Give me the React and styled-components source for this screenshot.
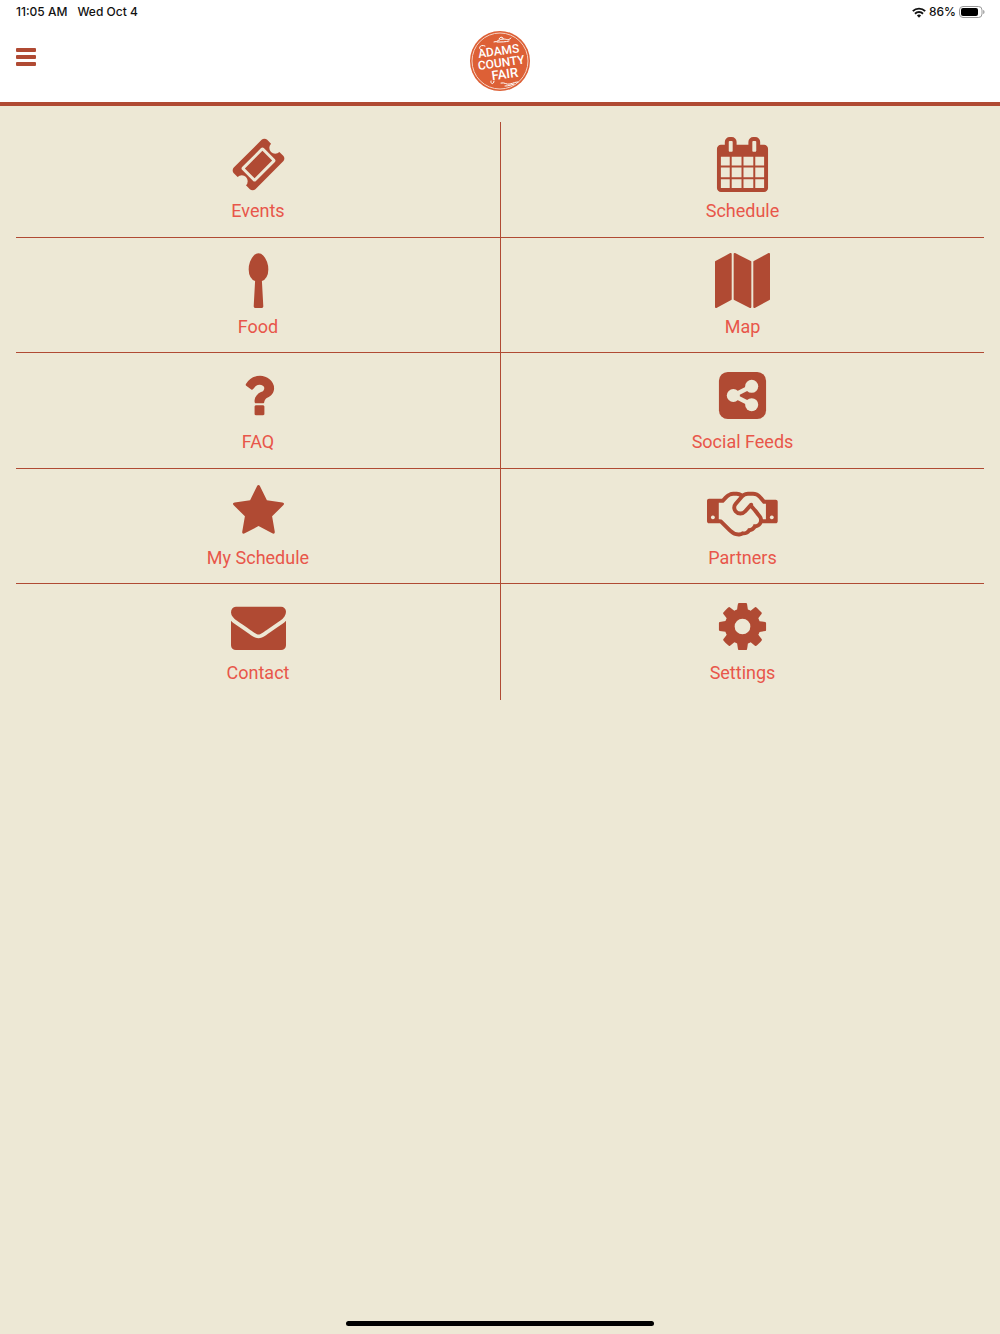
import React from "react";
import styled, { createGlobalStyle } from "styled-components";

const rust = "#b04a33";
const sand = "#ede8d5";

const GlobalStyle = createGlobalStyle`
  *, *::before, *::after { box-sizing: border-box; }
  body {
    margin: 0;
    background: ${sand};
    font-family: Inter, "Liberation Sans", sans-serif;
  }
`;

const Page = styled.div`
  min-height: 100vh;
  display: flex;
  flex-direction: column;
  background: ${sand};
`;

const StatusBar = styled.div`
  display: flex;
  align-items: center;
  justify-content: space-between;
  height: 24px;
  padding: 0 15px 0 16px;
  background: #fff;
  color: #111;
  font-size: 12px;
  font-weight: 500;
  line-height: 16px;
`;

const StatusGroup = styled.div`
  display: flex;
  align-items: center;
  gap: ${(p) => p.$gap}px;
`;

const Header = styled.header`
  display: grid;
  grid-template-columns: 1fr auto 1fr;
  align-items: start;
  height: 82px;
  padding: 7px 16px 0;
  background: #fff;
  border-bottom: 4px solid ${rust};
`;

const MenuButton = styled.button`
  justify-self: start;
  display: flex;
  flex-direction: column;
  gap: 3px;
  margin: 17px 0 0;
  padding: 0;
  border: 0;
  background: none;
  cursor: pointer;
`;

const Bar = styled.span`
  width: 20px;
  height: 4px;
  border-radius: 1px;
  background: ${rust};
`;

const HomeLink = styled.a`
  display: block;
  line-height: 0;
`;

const Menu = styled.nav`
  display: grid;
  grid-template-columns: 1fr 1fr;
  grid-template-rows: repeat(5, 1fr);
  min-height: 578px;
  margin: 16px;
`;

const MenuItem = styled.a`
  display: flex;
  flex-direction: column;
  align-items: center;
  gap: 7px;
  padding-top: 15px;
  color: #e8564a;
  font-family: Roboto, "Liberation Sans", sans-serif;
  font-size: 18px;
  line-height: 24px;
  text-decoration: none;
  border-bottom: 1px solid ${rust};
  &:nth-child(even) { border-left: 1px solid ${rust}; }
  &:nth-last-child(-n + 2) { border-bottom: 0; }
`;

const Icon = styled.svg`
  display: block;
  height: 55px;
  fill: ${rust};
`;

const HomeIndicator = styled.div`
  position: fixed;
  bottom: 8px;
  left: 50%;
  width: 308px;
  height: 5px;
  margin-left: -154px;
  border-radius: 3px;
  background: #000;
`;

const LogoText = styled.text`
  fill: #fff;
  font-family: Roboto, sans-serif;
  font-weight: 500;
`;

const items = [
  { label: "Events", d: "M1024 452l316 316-572 572-316-316zm-211 979l618-618q19-19 19-45t-19-45l-362-362q-18-18-45-18t-45 18l-618 618q-19 19-19 45t19 45l362 362q18 18 45 18t45-18zm889-637l-907 908q-37 37-90.5 37t-90.5-37l-126-126q56-56 56-136t-56-136-136-56-136 56l-125-126q-37-37-37-90.5t37-90.5l907-906q37-37 90.5-37t90.5 37l125 125q-56 56-56 136t56 136 136 56 136-56l126 125q37 37 37 90.5t-37 90.5z" },
  { label: "Schedule", d: "M192 1664h288v-288h-288v288zm352 0h320v-288h-320v288zm-352-352h288v-320h-288v320zm352 0h320v-320h-320v320zm-352-384h288v-288h-288v288zm736 736h320v-288h-320v288zm-384-736h320v-288h-320v288zm768 736h288v-288h-288v288zm-384-352h320v-320h-320v320zm-352-864v-288q0-13-9.5-22.5t-22.5-9.5h-64q-13 0-22.5 9.5t-9.5 22.5v288q0 13 9.5 22.5t22.5 9.5h64q13 0 22.5-9.5t9.5-22.5zm736 864h288v-320h-288v320zm-384-384h320v-288h-320v288zm384 0h288v-288h-288v288zm32-480v-288q0-13-9.5-22.5t-22.5-9.5h-64q-13 0-22.5 9.5t-9.5 22.5v288q0 13 9.5 22.5t22.5 9.5h64q13 0 22.5-9.5t9.5-22.5zm384-64v1280q0 52-38 90t-90 38h-1408q-52 0-90-38t-38-90v-1280q0-52 38-90t90-38h128v-96q0-66 47-113t113-47h64q66 0 113 47t47 113v96h384v-96q0-66 47-113t113-47h64q66 0 113 47t47 113v96h128q52 0 90 38t38 90z" },
  { label: "Food", d: "M1216 536q0 145-57 243.5t-152 135.5l45 813q2 26-16 45t-44 19h-192q-26 0-44-19t-16-45l45-813q-95-37-152-135.5t-57-243.5q0-128 42.5-249.5t117.5-200 160-78.5 160 78.5 117.5 200 42.5 249.5z" },
  { label: "Map", d: "M512 0q13 0 22.5 9.5t9.5 22.5v1472q0 20-17 28l-480 256q-7 4-15 4-13 0-22.5-9.5t-9.5-22.5v-1472q0-20 17-28l480-256q7-4 15-4zm1248 0q13 0 22.5 9.5t9.5 22.5v1472q0 20-17 28l-480 256q-7 4-15 4-13 0-22.5-9.5t-9.5-22.5v-1472q0-20 17-28l480-256q7-4 15-4zm-1120 0q8 0 14 3l512 256q18 10 18 29v1472q0 13-9.5 22.5t-22.5 9.5q-8 0-14-3l-512-256q-18-10-18-29v-1472q0-13 9.5-22.5t22.5-9.5z" },
  { label: "FAQ", d: "M1088 1256v240q0 16-12 28t-28 12h-240q-16 0-28-12t-12-28v-240q0-16 12-28t28-12h240q16 0 28 12t12 28zm316-600q0 54-15.5 101t-35 76.5-55 59.5-57.5 43.5-61 35.5q-41 23-68.5 65t-27.5 67q0 17-12 32.5t-28 15.5h-240q-15 0-25.5-18.5t-10.5-37.5v-45q0-83 65-156.5t143-108.5q59-27 84-56t25-76q0-42-46.5-74t-107.5-32q-65 0-108 29-35 25-107 115-13 16-31 16-12 0-25-8l-164-125q-13-10-15.5-25t5.5-28q160-266 464-266 80 0 161 31t146 83 106 127.5 41 158.5z" },
  { label: "Social Feeds", share: true },
  { label: "My Schedule", d: "M1728 647q0 22-26 48l-363 354 86 500q1 7 1 20 0 21-10.5 35.5t-30.5 14.5q-19 0-40-12l-449-236-449 236q-22 12-40 12-21 0-31.5-14.5t-10.5-35.5q0-6 2-20l86-500-364-354q-25-27-25-48 0-37 56-46l502-73 225-455q19-41 49-41t49 41l225 455 502 73q56 9 56 46z" },
  { label: "Partners", width: 2304, d: "M192 1152q40 0 56-32t0-64-56-32-56 32 0 64 56 32zm1473-58q-10-13-38.5-50t-41.5-54-38-49-42.5-53-40.5-47-45-49l-125 140q-83 94-208.5 92t-205.5-98q-57-69-56.5-158t58.5-157l177-206q-22-11-51-16.5t-47.5-6-56.5.5-49 1q-92 0-158 66l-158 158h-155v544q5 0 21-.5t22 0 19.5 2 20.5 4.5 17.5 8.5 18.5 13.5l297 292q115 111 227 111 78 0 125-47 57 20 112.5-8t72.5-85q74 6 127-44 20-18 36-45.5t14-50.5q10 10 43 10 43 0 77-21t49.5-53 12-71.5-30.5-73.5zm159 58h96v-512h-93l-157-180q-66-76-169-76h-167q-89 0-146 67l-209 243q-28 33-28 75t27 75q43 51 110 52t111-49l193-218q25-23 53.5-21.5t47 27 8.5 56.5q16 19 56 63t60 68q29 36 82.5 105.5t64.5 84.5q52 66 60 140zm288 0q40 0 56-32t0-64-56-32-56 32 0 64 56 32zm192-576v640q0 26-19 45t-45 19h-434q-27 65-82 106.5t-125 51.5q-33 48-80.5 81.5t-102.5 45.5q-42 53-104.5 81.5t-128.5 24.5q-60 34-126 39.5t-127.5-14-117-53.5-103.5-81l-287-282h-358q-26 0-45-19t-19-45v-672q0-26 19-45t45-19h421q14-14 47-48t47.5-48 44-40 50.5-37.5 51-25.5 62-19.5 68-5.5h117q99 0 181 56 82-56 181-56h167q35 0 67 6t56.5 14.5 51.5 26.5 44.5 31 43 39.5 39 42 41 48 41.5 48.5h355q26 0 45 19t19 45z" },
  { label: "Contact", d: "M1792 710v794q0 66-47 113t-113 47h-1472q-66 0-113-47t-47-113v-794q44 49 101 87 362 246 497 345 57 42 92.5 65.5t94.5 48 110 24.5h2q51 0 110-24.5t94.5-48 92.5-65.5q170-123 498-345 57-39 100-87zm0-294q0 79-49 151t-122 123q-376 261-468 325-10 7-42.5 30.5t-54 38.5-52 33.5-57.5 27.5-50 9h-2q-23 0-50-9t-57.5-27.5-52-33.5-54-38.5-42.5-30.5q-91-64-262-182.5t-205-142.5q-62-42-117-115.5t-55-136.5q0-78 41.5-130t118.5-52h1472q65 0 112.5 47t47.5 113z" },
  { label: "Settings", d: "M1152 896q0-106-75-181t-181-75-181 75-75 181 75 181 181 75 181-75 75-181zm512-109v222q0 12-8 23t-20 13l-185 28q-19 54-39 91 35 50 107 138 10 12 10 25t-9 23q-27 37-99 108t-94 71q-12 0-26-9l-138-108q-44 23-91 38-16 136-29 186-7 28-36 28h-222q-14 0-24.5-8.5t-11.5-21.5l-28-184q-49-16-90-37l-141 107q-10 9-25 9-14 0-25-11-126-114-165-168-7-10-7-23 0-12 8-23 15-21 51-66.5t54-70.5q-27-50-41-99l-183-27q-13-2-21-12.5t-8-23.5v-222q0-12 8-23t19-13l186-28q14-46 39-92-40-57-107-138-10-12-10-24 0-10 9-23 26-36 98.5-107.5t94.5-71.5q13 0 26 10l138 107q44-23 91-38 16-136 29-186 7-28 36-28h222q14 0 24.5 8.5t11.5 21.5l28 184q49 16 90 37l142-107q9-9 24-9 13 0 25 10 129 119 165 170 7 8 7 22 0 12-8 23-15 21-51 66.5t-54 70.5q26 50 41 98l183 28q13 2 21 12.5t8 23.5z" },
];

function ShareSquare() {
  return (
    <>
      <rect x="128" y="128" width="1536" height="1536" rx="288" />
      <path d="M1195 594L597 896l598 302" fill="none" stroke={sand} strokeWidth="140" />
      <g fill={sand}>
        <circle cx="597" cy="896" r="213" />
        <circle cx="1195" cy="597" r="213" />
        <circle cx="1195" cy="1195" r="213" />
      </g>
    </>
  );
}

function Logo() {
  return (
    <svg width="60" height="60" viewBox="0 0 60 60" role="img" aria-label="Adams County Fair">
      <circle cx="30" cy="30" r="30" fill="#dd6036" />
      <circle cx="30" cy="30" r="28" fill="none" stroke="#f6d3c4" strokeWidth="1" />
      <g transform="rotate(-8 30 30)" textAnchor="middle">
        <LogoText x="30" y="24" fontSize="12">ADAMS</LogoText>
        <LogoText x="31" y="36" fontSize="12">COUNTY</LogoText>
        <LogoText x="33" y="48" fontSize="13">FAIR</LogoText>
      </g>
      <g fill="none" stroke="#fff" strokeWidth="1" strokeLinecap="round">
        <path d="M15 15c-5-2-7 2-4 4" />
        <path d="M24 11c4 0 5-3 9-3s5 2 8-1M29 8c1-3 5-2 4 0M27 11c4 0 9 0 12-1" />
        <path d="M24 50c0 4-4 3-3 0" />
        <path d="M31 52c4-1 5 2 9 1s5-2 8-2M35 55c4 0 6-1 9-2" />
      </g>
    </svg>
  );
}

function Wifi() {
  return (
    <svg width="14" height="11" viewBox="0 0 14 11" role="img" aria-label="Wi-Fi">
      <g fill="none" stroke="#111" strokeWidth="1.9">
        <path d="M.8 4.2a8.8 8.8 0 0 1 12.4 0" />
        <path d="M3 6.7a5.7 5.7 0 0 1 8 0" />
      </g>
      <path d="M7 10.8L4.9 8.6a3 3 0 0 1 4.2 0z" fill="#111" />
    </svg>
  );
}

function Battery() {
  return (
    <svg width="26" height="12" viewBox="0 0 26 12" role="img" aria-label="Battery">
      <rect x=".5" y=".5" width="22.5" height="11" rx="3.5" fill="none" stroke="#999" />
      <rect x="2" y="2" width="17" height="8" rx="2" fill="#000" />
      <path d="M24.2 4v4c1-.3 1.3-1 1.3-2s-.3-1.700-1.300-2z" fill="#999" />
    </svg>
  );
}

export default function App() {
  return (
    <Page>
      <GlobalStyle />
      <StatusBar>
        <StatusGroup $gap={10}>
          <span>11:05 AM</span>
          <span>Wed Oct 4</span>
        </StatusGroup>
        <StatusGroup $gap={3}>
          <Wifi />
          <span>86%</span>
          <Battery />
        </StatusGroup>
      </StatusBar>
      <Header>
        <MenuButton type="button" aria-label="Open menu">
          <Bar />
          <Bar />
          <Bar />
        </MenuButton>
        <HomeLink href="#home">
          <Logo />
        </HomeLink>
      </Header>
      <main>
        <Menu aria-label="Main">
          {items.map(({ label, d, width = 1792, share }) => (
            <MenuItem key={label} href={"#" + label.toLowerCase().replace(" ", "-")}>
              <Icon viewBox={`0 0 ${width} 1792`} aria-hidden="true">
                {share ? <ShareSquare /> : <path d={d} />}
              </Icon>
              <span>{label}</span>
            </MenuItem>
          ))}
        </Menu>
      </main>
      <HomeIndicator />
    </Page>
  );
}
